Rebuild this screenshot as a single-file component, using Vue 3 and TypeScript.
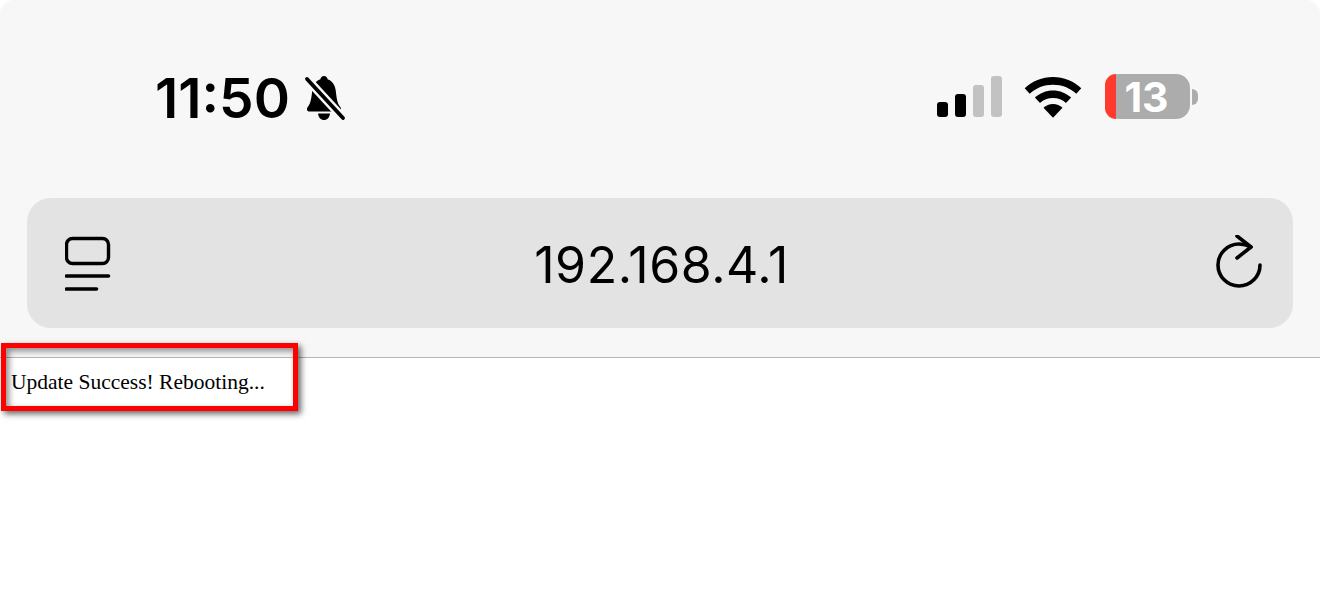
<script setup lang="ts">
const time = '11:50'
const address = '192.168.4.1'
const message = 'Update Success! Rebooting...'
const batteryLevel = '13'
</script>

<template>
  <div class="page">
    <header class="browser-bar">
      <div class="status-row">
        <div class="status-left">
          <span class="time">{{ time }}</span>
          <svg width="44" height="46" viewBox="0 0 44 46">
            <path d="M21 1c2 0 3.400 1.400 3.600 3.200 5 1.400 7.600 6.400 8.200 11.800.6 5.800 1.400 12 3.800 15 1.400 1.800 1.700 3 1.300 4-.4 1-1.300 1.500-2.700 1.500H6.800c-1.400 0-2.300-.5-2.700-1.500-.4-1-.1-2.200 1.300-4 2.400-3 3.200-9.200 3.800-15 .6-5.400 3.200-10.400 8.200-11.800.2-1.800 1.600-3.200 3.600-3.200z" fill="#000" />
            <path d="M15 38.500h12c-.3 3.800-2.800 6.500-6 6.500s-5.700-2.700-6-6.500z" fill="#000" />
            <path d="M4 4l36 39" stroke="#f7f7f7" stroke-width="8.500" fill="none" />
            <path d="M4 4l36 39" stroke="#000" stroke-width="3.800" stroke-linecap="round" fill="none" />
          </svg>
        </div>
        <div class="status-right">
          <svg width="66" height="42" viewBox="0 0 66 42">
            <rect x="1" y="26" width="11" height="15" rx="3" fill="#000" />
            <rect x="19" y="18" width="11" height="23" rx="3" fill="#000" />
            <rect x="37" y="9" width="11" height="32" rx="3" fill="#c2c2c2" />
            <rect x="55" y="0" width="11" height="41" rx="3" fill="#c2c2c2" />
          </svg>
          <svg width="58" height="42" viewBox="0 0 58 42">
            <path d="M29 1c10.800 0 20.800 4.200 28.300 11.300l-5 5.400C46.200 12 38 8.700 29 8.700S11.800 12 5.700 17.700l-5-5.400C8.200 5.200 18.200 1 29 1z" fill="#000" />
            <path d="M29 14.500c7 0 13.300 2.700 18.100 7.100l-5.100 5.400C38.500 23.800 34 22 29 22s-9.500 1.800-13 5l-5.100-5.400C15.700 17.200 22 14.500 29 14.500z" fill="#000" />
            <path d="M29 28c3.700 0 7 1.400 9.500 3.700L29 41.800l-9.500-10.100C22 29.400 25.300 28 29 28z" fill="#000" />
          </svg>
          <div class="battery">
            <div class="battery-body">
              <span class="battery-low"></span>
              <span class="battery-text">{{ batteryLevel }}</span>
            </div>
            <span class="battery-cap"></span>
          </div>
        </div>
      </div>
      <div class="url-bar">
        <svg width="46" height="56" viewBox="0 0 46 56" fill="none" stroke="#000" stroke-linecap="round">
          <rect x="1.500" y="3.500" width="42" height="25" rx="6" stroke-width="3.400" />
          <path d="M1.500 41h42" stroke-width="3.600" />
          <path d="M1.500 54h30" stroke-width="3.600" />
        </svg>
        <span class="address">{{ address }}</span>
        <svg width="46" height="56" viewBox="0 0 46 56" fill="none" stroke="#000" stroke-width="3.600" stroke-linecap="round" stroke-linejoin="round">
          <path d="M44 30a21 21 0 1 1-21-21c4 0 8 1 12 3" />
          <path d="M21 1l14 11-14 11" />
        </svg>
      </div>
    </header>
    <main class="content">{{ message }}</main>
    <div class="highlight"></div>
  </div>
</template>

<style>
html,
body {
  background: #fff;
}
</style>

<style scoped>
.page {
  position: relative;
  width: 1320px;
  height: 605px;
  overflow: hidden;
  background: #fff;
}

.browser-bar {
  box-sizing: border-box;
  height: 358px;
  padding: 0 27px;
  background: #f7f7f7;
  border-bottom: 1px solid #b4b4b4;
  border-radius: 14px 14px 0 0;
}

.status-row {
  display: flex;
  justify-content: space-between;
  align-items: center;
  height: 198px;
  padding: 0 95px 3px 128px;
  box-sizing: border-box;
}

.status-left {
  display: flex;
  align-items: center;
  gap: 13px;
}

.time {
  font-family: Inter, sans-serif;
  font-size: 55px;
  font-weight: 600;
  line-height: 60px;
  color: #000;
}

.status-right {
  display: flex;
  align-items: center;
  gap: 22px;
  margin-bottom: 2px;
}

.battery {
  display: flex;
  align-items: center;
  gap: 2px;
  margin-left: 1px;
}

.battery-body {
  position: relative;
  display: flex;
  align-items: center;
  justify-content: center;
  box-sizing: border-box;
  width: 85px;
  height: 45px;
  padding-top: 1px;
  padding-right: 2px;
  background: #acacac;
  border-radius: 14px;
}

.battery-low {
  position: absolute;
  left: 0;
  top: 0;
  bottom: 0;
  width: 11px;
  background: #ff3b30;
  border-radius: 14px 0 0 14px;
}

.battery-text {
  font-family: Inter, sans-serif;
  font-size: 41px;
  font-weight: 700;
  line-height: 44px;
  color: #fff;
}

.battery-cap {
  width: 6px;
  height: 16px;
  background: #acacac;
  border-radius: 0 8px 8px 0;
}

.url-bar {
  display: flex;
  align-items: center;
  justify-content: space-between;
  box-sizing: border-box;
  height: 130px;
  padding: 0 31px 0 38px;
  background: #e3e3e3;
  border-radius: 24px;
}

.address {
  margin: 4px 4px 0 0;
  font-family: Inter, sans-serif;
  font-size: 50px;
  font-weight: 400;
  letter-spacing: 0.55px;
  color: #000;
}

.content {
  display: block;
  padding: 12px 11px;
  font-family: 'Liberation Serif', serif;
  font-size: 21.5px;
  line-height: 24px;
  color: #000;
}

.highlight {
  position: absolute;
  left: 1px;
  top: 343px;
  box-sizing: border-box;
  width: 297px;
  height: 68px;
  border: 5px solid #ff0000;
  box-shadow: 3px 3px 6px rgba(0, 0, 0, 0.6), inset 3px 3px 6px rgba(0, 0, 0, 0.45);
}
</style>
